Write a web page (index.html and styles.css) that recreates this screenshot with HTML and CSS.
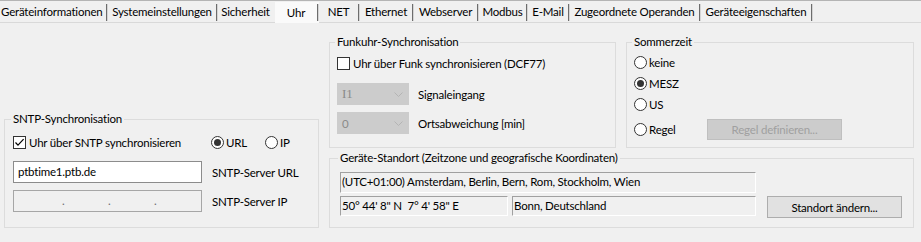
FILE: index.html
```html
<!DOCTYPE html>
<html lang="de">
<head>
    <meta charset="UTF-8">
    <title>Uhr - Einstellungen</title>
    <link rel="stylesheet" href="styles.css">
</head>
<body>
    <div class="tabs">
        <span class="tab first">Geräteinformationen</span>
        <span class="tab">Systemeinstellungen</span>
        <span class="tab">Sicherheit</span>
        <span class="tab active">Uhr</span>
        <span class="tab">NET</span>
        <span class="tab">Ethernet</span>
        <span class="tab">Webserver</span>
        <span class="tab">Modbus</span>
        <span class="tab">E-Mail</span>
        <span class="tab">Zugeordnete Operanden</span>
        <span class="tab">Geräteeigenschaften</span>
    </div>

    <div class="page">
        <div class="col-left">
            <fieldset class="group sntp">
                <legend>SNTP-Synchronisation</legend>
                <div class="row opts">
                    <label class="check sntp-check">
                        <span class="box"><svg width="11" height="11" viewBox="0 0 11 11"><polyline points="1.5,5.5 4,8.2 9.6,2.2" fill="none" stroke="#000" stroke-width="1.2"/></svg></span>
                        Uhr über SNTP synchronisieren
                    </label>
                    <label class="radio url"><span class="dot on"></span>URL</label>
                    <label class="radio"><span class="dot"></span>IP</label>
                </div>
                <div class="row field-row first-field">
                    <div class="textbox">ptbtime1.ptb.de</div>
                    <span>SNTP-Server URL</span>
                </div>
                <div class="row field-row second-field">
                    <div class="textbox ipbox"><span>.</span><span>.</span><span>.</span></div>
                    <span>SNTP-Server IP</span>
                </div>
            </fieldset>
        </div>

        <div class="col-right">
            <div class="top-row">
                <fieldset class="group funk">
                    <legend>Funkuhr-Synchronisation</legend>
                    <label class="check funk-check">
                        <span class="box"></span>
                        Uhr über Funk synchronisieren (DCF77)
                    </label>
                    <div class="row combo-row first-combo">
                        <div class="combo"><span class="combo-val mono">I1</span>
                            <svg width="9" height="5" viewBox="0 0 9 5"><polyline points="0.5,0.5 4.5,4.5 8.5,0.5" fill="none" stroke="#b4b4b4"/></svg>
                        </div>
                        <span>Signaleingang</span>
                    </div>
                    <div class="row combo-row second-combo">
                        <div class="combo"><span class="combo-val">0</span>
                            <svg width="9" height="5" viewBox="0 0 9 5"><polyline points="0.5,0.5 4.5,4.5 8.5,0.5" fill="none" stroke="#b4b4b4"/></svg>
                        </div>
                        <span>Ortsabweichung [min]</span>
                    </div>
                </fieldset>

                <fieldset class="group sommer">
                    <legend>Sommerzeit</legend>
                    <label class="radio srow"><span class="dot"></span>keine</label>
                    <label class="radio srow"><span class="dot on"></span>MESZ</label>
                    <label class="radio srow"><span class="dot"></span>US</label>
                    <div class="row regel-row">
                        <label class="radio regel"><span class="dot"></span>Regel</label>
                        <button class="btn disabled" disabled>Regel definieren...</button>
                    </div>
                </fieldset>
            </div>

            <fieldset class="group standort">
                <legend>Geräte-Standort (Zeitzone und geografische Koordinaten)</legend>
                <div class="readonly zone">(UTC+01:00) Amsterdam, Berlin, Bern, Rom, Stockholm, Wien</div>
                <div class="row loc-row">
                    <div class="readonly coords">50° 44' 8" N&nbsp;&nbsp;7° 4' 58" E</div>
                    <div class="readonly city">Bonn, Deutschland</div>
                    <button class="btn">Standort ändern...</button>
                </div>
            </fieldset>
        </div>
    </div>
</body>
</html>
```

FILE: styles.css
```css
* {
    box-sizing: border-box;
}

body {
    margin: 0;
    width: 921px;
    height: 242px;
    background: #f0f0f0;
    color: #000;
    font-family: 'Segoe UI', Lato, 'Noto Sans', sans-serif;
    font-size: 11.5px;
    letter-spacing: -0.2px;
    overflow: hidden;
}

/* Reiter */
.tabs {
    display: flex;
    align-items: flex-end;
    height: 23px;
    border-top: 1px solid #b4b4b4;
    border-bottom: 1px solid #d9d9d9;
}

.tab {
    position: relative;
    flex: 0 0 auto;
    height: 20px;
    line-height: 19px;
    padding-right: 2px;
    text-align: center;
    white-space: nowrap;
}

.tab::after {
    content: '';
    position: absolute;
    right: 0;
    top: 2px;
    width: 1px;
    height: 17px;
    background: #6d6d6d;
    border-right: 1px solid #d4d4d4;
}

.tab:has(+ .active)::after {
    display: none;
}

.tab:nth-child(1) { width: 108px; text-align: left; padding-left: 1px; }
.tab:nth-child(2) { width: 110px; }
.tab:nth-child(3) { width: 57px; }
.tab:nth-child(4) { width: 44px; }
.tab:nth-child(5) { width: 41px; }
.tab:nth-child(6) { width: 54px; }
.tab:nth-child(7) { width: 65px; }
.tab:nth-child(8) { width: 49px; }
.tab:nth-child(9) { width: 42px; }
.tab:nth-child(10) { width: 131px; }
.tab:nth-child(11) { width: 112px; }

.tab.active {
    height: 21px;
    margin-bottom: -1px;
    line-height: 22px;
    background: #fafafa;
}

/* Inhalt */
.page {
    display: flex;
    align-items: flex-end;
    gap: 10px;
    padding: 0 7px 0 4px;
}

.col-left {
    width: 315px;
}

.col-right {
    width: 585px;
    margin-top: 11px;
    display: flex;
    flex-direction: column;
    gap: 2px;
}

.top-row {
    display: flex;
    gap: 10px;
}

.group {
    margin: 0;
    min-width: 0;
    border: 1px solid #dcdcdc;
    padding: 0 8px;
}

.group legend {
    padding: 0 2px;
    margin-left: -2px;
    line-height: 16px;
}

.row {
    display: flex;
    align-items: center;
}

/* Kontrollkästchen und Optionsfelder */
.check,
.radio {
    display: flex;
    align-items: center;
    height: 16px;
    white-space: nowrap;
}

.box {
    width: 13px;
    height: 13px;
    margin-right: 3px;
    border: 1px solid #333;
    background: #fff;
    display: flex;
}

.dot {
    width: 13px;
    height: 13px;
    margin-right: 2px;
    border: 1px solid #333;
    border-radius: 50%;
    background: #fff;
    display: flex;
    align-items: center;
    justify-content: center;
}

.dot.on::before {
    content: '';
    width: 7px;
    height: 7px;
    border-radius: 50%;
    background: #333;
}

/* SNTP */
.sntp {
    padding-bottom: 15px;
}

.opts {
    margin-top: 7px;
}

.sntp-check {
    width: 198px;
}

.radio.url {
    width: 54px;
}

.field-row {
    gap: 10px;
}

.first-field {
    margin-top: 11px;
}

.second-field {
    margin-top: 7px;
}

.textbox {
    width: 189px;
    height: 22px;
    line-height: 20px;
    padding-left: 4px;
    border: 1px solid #8c8c8c;
    background: #fff;
}

.ipbox {
    display: flex;
    gap: 43px;
    padding-left: 48px;
    background: #f0f0f0;
    border-color: #a6a6a6;
    color: #6d6d6d;
}

.ipbox span {
    width: 3px;
}

/* Funkuhr */
.funk {
    width: 287px;
    padding: 0 7px 13px;
}

.funk-check {
    margin-top: 5px;
}

.combo-row {
    gap: 9px;
}

.first-combo {
    margin-top: 12px;
}

.second-combo {
    margin-top: 7px;
}

.combo {
    width: 72px;
    height: 22px;
    display: flex;
    align-items: center;
    justify-content: space-between;
    padding: 0 6px 0 5px;
    background: #cccccc;
    color: #8a8a8a;
}

.mono {
    font-family: 'Liberation Serif', serif;
    font-size: 13px;
}

/* Sommerzeit */
.sommer {
    width: 288px;
    padding: 0 7px 7px;
}

.srow {
    margin-top: 5px;
}

.srow:first-of-type {
    margin-top: 4px;
}

.regel-row {
    margin-top: 7px;
}

.radio.regel {
    width: 73px;
}

.btn {
    height: 22px;
    padding: 0;
    font-family: inherit;
    font-size: inherit;
    letter-spacing: inherit;
    color: #000;
    background: #e1e1e1;
    border: 1px solid #adadad;
}

.btn.disabled {
    width: 135px;
    height: 21px;
    background: #cccccc;
    border-color: #bfbfbf;
    color: #a0a0a0;
}

/* Standort */
.standort {
    padding: 0 10px 9px;
}

.readonly {
    height: 20px;
    line-height: 18px;
    padding-left: 1px;
    border: 1px solid #fff;
    border-top-color: #a0a0a0;
    border-left-color: #a0a0a0;
    white-space: nowrap;
}

.zone {
    width: 416px;
    height: 21px;
    margin-top: 6px;
}

.loc-row {
    margin-top: 3px;
    align-items: flex-start;
}

.coords {
    width: 168px;
    margin-right: 4px;
}

.city {
    width: 244px;
}

.loc-row .btn {
    width: 135px;
    margin-left: 11px;
}
```
